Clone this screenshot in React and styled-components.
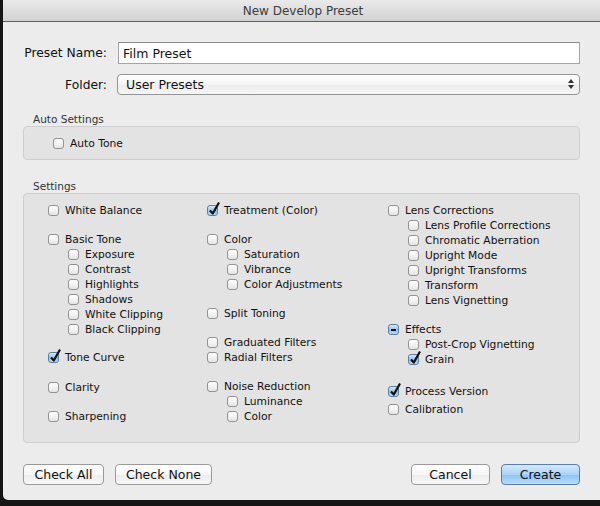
import React from 'react';
import styled, { createGlobalStyle } from 'styled-components';

const GlobalStyle = createGlobalStyle`
  html, body {
    margin: 0;
    padding: 0;
    background: #151515;
    font-family: "DejaVu Sans", "Liberation Sans", sans-serif;
  }
`;

const Window = styled.div`
  margin-left: 3px;
  width: 597px;
  height: 500px;
  background: #ececec;
  border-bottom-left-radius: 5px;
  display: flex;
  flex-direction: column;
  overflow: hidden;
`;

const TitleBar = styled.div`
  height: 21px;
  border-bottom: 1px solid #5e5e5e;
  background: linear-gradient(#eaeaea, #d2d2d2);
  display: flex;
  align-items: center;
  justify-content: center;
  font-size: 12px;
  color: #3c3c3c;
  padding-left: 3px;
`;

const Body = styled.div`
  padding: 20px 20px 0 20px;
  display: flex;
  flex-direction: column;
`;

const FieldRow = styled.div`
  display: grid;
  grid-template-columns: 84px 1fr;
  column-gap: ${p => p.$gap}px;
  align-items: center;
  margin-top: ${p => p.$top || 0}px;
`;

const FieldLabel = styled.label`
  text-align: right;
  font-size: 12.3px;
  color: #111;
`;

const TextInput = styled.div`
  height: 20px;
  border: 1px solid #a4a4a4;
  border-top-color: #8c8c8c;
  background: #fff;
  font-size: 12.5px;
  color: #111;
  padding-left: 4px;
  display: flex;
  align-items: center;
`;

const Select = styled.div`
  position: relative;
  height: 19px;
  border: 1px solid #959595;
  border-radius: 4px;
  background: linear-gradient(#ffffff, #f4f4f4 50%, #ececec 51%, #f6f6f6);
  font-size: 12.5px;
  color: #111;
  padding-left: 8px;
  display: flex;
  align-items: center;
`;

const Arrows = styled.span`
  position: absolute;
  right: 5px;
  top: 4px;
  display: flex;
  flex-direction: column;
  gap: 2px;
`;

const SectionLabel = styled.div`
  font-size: 10.5px;
  color: #333;
  height: 14px;
  line-height: 14px;
  padding-left: 10px;
  margin-top: ${p => p.$top}px;
`;

const Group = styled.div`
  background: #e3e3e3;
  border: 1px solid #cfcfcf;
  border-radius: 4px;
  box-sizing: border-box;
  height: ${p => p.$height}px;
`;

const AutoGroup = styled(Group)`
  display: flex;
  align-items: center;
  padding-left: 29px;
`;

const Columns = styled(Group)`
  display: grid;
  grid-template-columns: 159px 181px 1fr;
  padding: 9px 0 0 24px;
  align-items: start;
`;

const Column = styled.div`
  display: flex;
  flex-direction: column;
`;

const Row = styled.div`
  height: 15px;
  display: flex;
  align-items: center;
  gap: 6px;
  margin-top: ${p => p.$top || 0}px;
  padding-left: ${p => (p.$sub ? 20 : 0)}px;
  font-size: 10.7px;
  color: #111;
  white-space: nowrap;
`;

const Box = styled.span`
  position: relative;
  flex: none;
  width: 11px;
  height: 11px;
  box-sizing: border-box;
  border-radius: 3px;
  border: 1px solid ${p => (p.$on ? '#5f7ea4' : '#939393')};
  background: ${p =>
    p.$on
      ? 'linear-gradient(#d6e8fa, #93c2ee 55%, #b6d8f7)'
      : 'linear-gradient(#ffffff, #f0f0f0 60%, #e4e4e4)'};
`;

const Check = styled.svg`
  position: absolute;
  left: 0px;
  top: -5px;
`;

const Dash = styled.span`
  position: absolute;
  left: 2px;
  top: 4px;
  width: 5px;
  height: 1.5px;
  background: #111;
`;

const ButtonBar = styled.div`
  display: flex;
  align-items: center;
  gap: 11px;
  margin-top: 21px;
`;

const Spacer = styled.div`
  flex: 1;
`;

const Button = styled.button`
  width: ${p => p.$w}px;
  height: 21px;
  border-radius: 4px;
  border: 1px solid ${p => (p.$primary ? '#5b7ca6' : '#9a9a9a')};
  background: ${p =>
    p.$primary
      ? 'linear-gradient(#d4e9fc, #a9d3f8 50%, #8cc3f3 51%, #b7dcfb)'
      : 'linear-gradient(#ffffff, #f6f6f6 50%, #ececec 51%, #f7f7f7)'};
  font-family: inherit;
  font-size: 12.5px;
  color: #111;
  padding: 0;
  cursor: pointer;
`;

function Checkbox({ label, on, mixed, sub, top }) {
  return (
    <Row $sub={sub} $top={top}>
      <Box $on={on || mixed}>
        {on && (
          <Check width="13" height="15" viewBox="0 0 13 15">
            <path d="M2 9.5 L4.8 12.5 L11 1.5" fill="none" stroke="#111" strokeWidth="2.2" strokeLinejoin="round" />
          </Check>
        )}
        {mixed && <Dash />}
      </Box>
      {label}
    </Row>
  );
}

const col1 = [
  { label: 'White Balance' },
  { label: 'Basic Tone', top: 14 },
  { label: 'Exposure', sub: true },
  { label: 'Contrast', sub: true },
  { label: 'Highlights', sub: true },
  { label: 'Shadows', sub: true },
  { label: 'White Clipping', sub: true },
  { label: 'Black Clipping', sub: true },
  { label: 'Tone Curve', on: true, top: 13 },
  { label: 'Clarity', top: 15 },
  { label: 'Sharpening', top: 14 },
];

const col2 = [
  { label: 'Treatment (Color)', on: true },
  { label: 'Color', top: 14 },
  { label: 'Saturation', sub: true },
  { label: 'Vibrance', sub: true },
  { label: 'Color Adjustments', sub: true },
  { label: 'Split Toning', top: 14 },
  { label: 'Graduated Filters', top: 14 },
  { label: 'Radial Filters' },
  { label: 'Noise Reduction', top: 14 },
  { label: 'Luminance', sub: true },
  { label: 'Color', sub: true },
];

const col3 = [
  { label: 'Lens Corrections' },
  { label: 'Lens Profile Corrections', sub: true },
  { label: 'Chromatic Aberration', sub: true },
  { label: 'Upright Mode', sub: true },
  { label: 'Upright Transforms', sub: true },
  { label: 'Transform', sub: true },
  { label: 'Lens Vignetting', sub: true },
  { label: 'Effects', mixed: true, top: 14 },
  { label: 'Post-Crop Vignetting', sub: true },
  { label: 'Grain', sub: true, on: true },
  { label: 'Process Version', on: true, top: 17 },
  { label: 'Calibration', top: 3 },
];

export default function App() {
  return (
    <>
      <GlobalStyle />
      <Window>
        <TitleBar>New Develop Preset</TitleBar>
        <Body>
          <FieldRow $gap={11}>
            <FieldLabel>Preset Name:</FieldLabel>
            <TextInput>Film Preset</TextInput>
          </FieldRow>
          <FieldRow $gap={10} $top={10}>
            <FieldLabel>Folder:</FieldLabel>
            <Select>
              User Presets
              <Arrows>
                <svg width="6" height="4" viewBox="0 0 6 4"><path d="M3 0 L6 4 L0 4 Z" fill="#333" /></svg>
                <svg width="6" height="4" viewBox="0 0 6 4"><path d="M0 0 L6 0 L3 4 Z" fill="#333" /></svg>
              </Arrows>
            </Select>
          </FieldRow>

          <SectionLabel $top={17}>Auto Settings</SectionLabel>
          <AutoGroup $height={34}>
            <Checkbox label="Auto Tone" />
          </AutoGroup>

          <SectionLabel $top={19}>Settings</SectionLabel>
          <Columns $height={250}>
            {[col1, col2, col3].map((col, i) => (
              <Column key={i}>
                {col.map((item, j) => (
                  <Checkbox key={j} {...item} />
                ))}
              </Column>
            ))}
          </Columns>

          <ButtonBar>
            <Button $w={81}>Check All</Button>
            <Button $w={97}>Check None</Button>
            <Spacer />
            <Button $w={79}>Cancel</Button>
            <Button $w={79} $primary>Create</Button>
          </ButtonBar>
        </Body>
      </Window>
    </>
  );
}
